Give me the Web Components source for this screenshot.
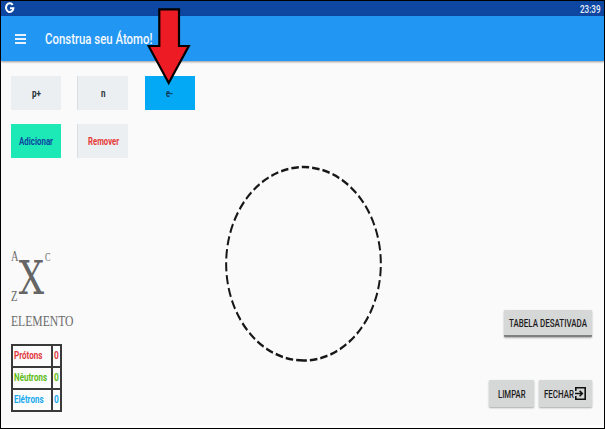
<!DOCTYPE html>
<html lang="pt"><head><meta charset="utf-8"><title>Construa seu Átomo!</title>
<style>html,body{margin:0;height:429px;overflow:hidden}body{font-family:Roboto,"Liberation Sans",sans-serif;color:#222}</style></head>
<body><atom-app></atom-app>
<script>
const define=(name,html)=>customElements.define(name,class extends HTMLElement{
  constructor(){super();this.attachShadow({mode:'open'}).innerHTML=html;}
});

// Single line of text condensed to the width given in "w"
customElements.define('fit-text',class extends HTMLElement{
  connectedCallback(){
    const w=+this.getAttribute('w'),s=+this.getAttribute('size'),h=Math.ceil(s*1.2);
    const r=this.attachShadow({mode:'open'});
    r.innerHTML=`<style>:host{display:block;flex:none;line-height:0}svg{display:block;overflow:visible}</style>
    <svg width="${w}" height="${h}"><text x="0" y="${s}" textLength="${w}" lengthAdjust="spacingAndGlyphs" fill="currentColor" font-size="${s}"></text></svg>`;
    r.querySelector('text').textContent=this.textContent;
  }
});

define('status-bar',`<style>:host{display:flex;height:15px;background:#0e47a1;color:#e8eefa;justify-content:space-between;align-items:center;padding:0 4px 0 4px;box-sizing:border-box;font-weight:500}
svg{display:block;margin-top:-1px}fit-text{margin-top:-1px}</style>
<svg width="10" height="12" viewBox="0 0 10 12"><path d="M7.7 2.9A3.7 4.4 0 1 0 8.4 6.3H5" fill="none" stroke="#fff" stroke-width="2"/></svg>
<fit-text w="20.5" size="10.6">23:39</fit-text>`);

define('app-bar',`<style>:host{display:flex;height:45px;background:#2196f3;color:#f4f9ff;align-items:center;padding-left:13.7px;box-sizing:border-box;box-shadow:0 1px 2px #0006;font-weight:500;position:relative}
svg{display:block;margin-right:19px}fit-text{margin-top:-1px}</style>
<svg width="11" height="10"><path d="M0 1H11M0 5H11M0 9H11" stroke="#e6f3ff" stroke-width="1.8"/></svg>
<fit-text w="107.5" size="14.6">Construa seu Átomo!</fit-text>`);

define('flat-button',`<style>:host{display:flex;width:50px;height:34px;align-items:center;justify-content:center;background:#eceff1;font-weight:700;color:#263238}
:host([edge]){width:50px;border-left:1px solid #dcdfe1}
:host([active]){background:#03a9f4;color:#0b3350}
:host([add]){background:#1de9b6;color:#0d47a1}
:host([remove]){color:#e53935}</style><slot></slot>`);

define('raised-button',`<style>:host{display:flex;height:27px;align-items:center;justify-content:center;background:#d6d7d7;border-radius:1px;box-shadow:0 1px 2px #0005;font-weight:500;color:#1c1c1c;box-sizing:border-box}
:host([toggle]){border-bottom:2px solid #808080}</style><slot></slot>`);

define('element-symbol',`<style>:host{display:block;color:#6b6b6b;font-family:"Liberation Serif",serif}svg{display:block;overflow:visible}text{fill:currentColor}.x{font-family:"DejaVu Serif",serif;fill:#656565}</style>
<svg width="64" height="79"><text x="0" y="12" font-size="15" textLength="7.5" lengthAdjust="spacingAndGlyphs">A</text>
<text class="x" x="7.7" y="44.6" font-size="47" textLength="25.3" lengthAdjust="spacingAndGlyphs">X</text>
<text x="34" y="12" font-size="12.5" textLength="5.5" lengthAdjust="spacingAndGlyphs">C</text>
<text x="0" y="52" font-size="15.5" textLength="6.5" lengthAdjust="spacingAndGlyphs">Z</text>
<text x="0" y="77" font-size="15.2" textLength="62.5" lengthAdjust="spacingAndGlyphs">ELEMENTO</text></svg>`);

define('particle-table',`<style>:host{display:grid;grid-template-columns:37.6px 7.8px;grid-auto-rows:20px;gap:2px;background:#3a3a3a;padding:2px;width:max-content;font-weight:700}
div{background:#fcfcfc;display:flex;align-items:center;padding-left:1px}.n{padding-left:1.4px}fit-text{margin-top:-1px}
.p{color:#e0393c}.u{color:#5cbb14}.e{color:#18a8f0}</style>
<div class="p"><fit-text w="28.5" size="10">Prótons</fit-text></div><div class="p n"><fit-text w="4.8" size="10.4">0</fit-text></div>
<div class="u"><fit-text w="33" size="10">Nêutrons</fit-text></div><div class="u n"><fit-text w="4.8" size="10.4">0</fit-text></div>
<div class="e"><fit-text w="29.5" size="10">Elétrons</fit-text></div><div class="e n"><fit-text w="4.8" size="10.4">0</fit-text></div>`);

// Electron shell: dashed circle stretched vertically
define('atom-orbit',`<style>:host{display:block}svg{display:block}</style>
<svg width="160" height="198" viewBox="0 0 160 198"><g transform="translate(80.5 98.8) scale(.8 1)"><path d="M0 96.7A96.7 96.7 0 0 1 0-96.7A96.7 96.7 0 0 1 0 96.7" fill="none" stroke="#171717" stroke-width="2.5" stroke-dasharray="9.3 3.79"/></g></svg>`);

define('pointer-arrow',`<style>:host{display:block;position:absolute;left:146px;top:6px;z-index:3}svg{display:block}</style>
<svg width="44" height="80" viewBox="147 7 44 80"><path d="M159.3 9.3H179V46H188.8L168.7 83L148.6 46H159.3Z" fill="#ed1c24" stroke="#000" stroke-width="2.2"/></svg>`);

define('atom-app',`<style>:host{display:flex;flex-direction:column;position:relative;width:605px;height:429px;box-sizing:border-box;border:1px solid #000;background:#fafafa}
main{flex:1;display:grid;grid-template-columns:214px 176px 1fr;border-bottom:3px solid #fff;box-sizing:border-box}
.left{padding:15px 0 0 10px}
.row{display:flex;height:34px;margin-bottom:14px}
.row>:nth-child(2){margin-left:16px}.row>:nth-child(3){margin-left:16.5px}
element-symbol{margin-top:91px}particle-table{margin-top:15.5px}
.mid{padding:103.5px 0 0 8.3px}
.right{display:flex;flex-direction:column;align-items:flex-end;padding:248.6px 12.4px 0 0}
.actions{display:flex;gap:4.5px;margin-top:43px}
svg{display:block;margin-left:1px}</style>
<status-bar></status-bar><app-bar></app-bar>
<main><section class="left">
<div class="row"><flat-button><fit-text w="9" size="10">p+</fit-text></flat-button><flat-button edge><fit-text w="4.5" size="10">n</fit-text></flat-button><flat-button active><fit-text w="7" size="10">e-</fit-text></flat-button></div>
<div class="row"><flat-button add><fit-text w="34" size="10">Adicionar</fit-text></flat-button><flat-button edge remove><fit-text w="31" size="10">Remover</fit-text></flat-button></div>
<element-symbol></element-symbol><particle-table></particle-table></section>
<section class="mid"><atom-orbit></atom-orbit></section>
<section class="right"><raised-button toggle style="width:88px"><fit-text w="78" size="10.8">TABELA DESATIVADA</fit-text></raised-button>
<div class="actions"><raised-button style="width:45.5px"><fit-text w="27.5" size="10.8">LIMPAR</fit-text></raised-button>
<raised-button style="width:53px"><fit-text w="30" size="10.8">FECHAR</fit-text><svg width="11" height="13" viewBox="0 0 11 13"><path d="M.8 4V.8H10.2V12.2H.8V9M0 6.5H7M4.6 3.8L7.3 6.5L4.6 9.2" fill="none" stroke="#111" stroke-width="1.6"/></svg></raised-button></div></section></main>
<pointer-arrow></pointer-arrow>`);
</script></body></html>
